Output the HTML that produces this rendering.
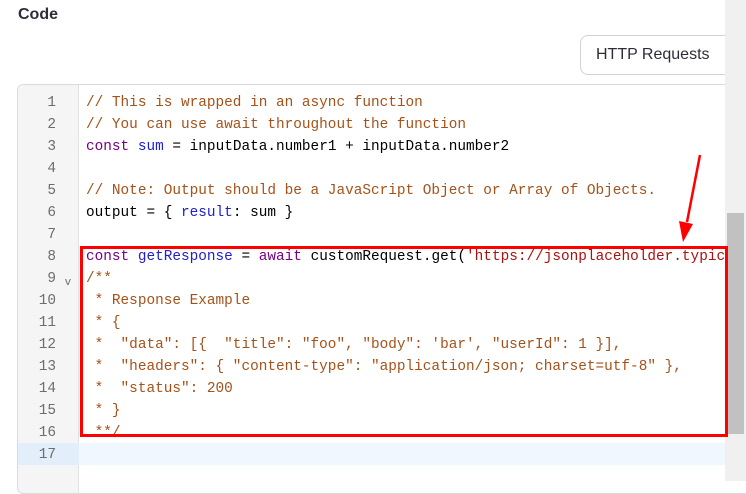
<!DOCTYPE html>
<html><head><meta charset="utf-8"><style>
*{margin:0;padding:0;box-sizing:border-box}
body{width:746px;height:481px;overflow:hidden;background:#fff;font-family:"Liberation Sans",sans-serif;position:relative}
.title{position:absolute;left:18px;top:6px;font-weight:bold;font-size:16px;color:#2d2e3a}
.btn{position:absolute;left:580px;top:35px;width:152px;height:40px;border:1px solid #d0d3da;border-radius:8px;font-size:16px;color:#2d2e3a;padding:10px 0 0 15px;background:#fff}
.ed{position:absolute;left:17px;top:84px;width:740px;height:410px;border:1px solid #d9dbe0;border-radius:6px;background:#fff;overflow:hidden}
.gut{position:absolute;left:0;top:0;width:61px;height:100%;background:#f5f5f5;border-right:1px solid #e2e2e2}
.ln{position:absolute;left:0;width:61px;height:22px;font-family:"Liberation Mono",monospace;font-size:14.4px;color:#6d6d6d;line-height:22px}
.ln span{display:inline-block;width:38px;text-align:right}
.code{position:absolute;left:68px;font-family:"Liberation Mono",monospace;font-size:14.4px;line-height:22px;white-space:pre;color:#000}
.c{color:#a5521a}.k{color:#770088}.v{color:#2020cc}.s{color:#aa1111}
.hl{position:absolute;left:0;top:358px;width:740px;height:22px;background:#f0f7fe}
.hlg{position:absolute;left:0;top:358px;width:61px;height:22px;background:#e2eefa}
.sb{position:absolute;left:725px;top:0;width:21px;height:481px;background:#f0f0f0}
.th{position:absolute;left:727px;top:213px;width:17px;height:221px;background:#c1c1c1}
.red{position:absolute;left:80px;top:246px;width:648px;height:191px;border:3px solid #f00}
</style></head><body>
<div class="title">Code</div>
<div class="btn">HTTP Requests</div>
<div class="ed">
<div class="hl"></div>
<div class="gut"></div>
<div class="hlg"></div>
<div class="ln" style="top:7px"><span>1</span></div>
<div class="ln" style="top:29px"><span>2</span></div>
<div class="ln" style="top:51px"><span>3</span></div>
<div class="ln" style="top:73px"><span>4</span></div>
<div class="ln" style="top:95px"><span>5</span></div>
<div class="ln" style="top:117px"><span>6</span></div>
<div class="ln" style="top:139px"><span>7</span></div>
<div class="ln" style="top:161px"><span>8</span></div>
<div class="ln" style="top:183px"><span>9</span> <small style="font-size:11px;position:relative;top:3px">v</small></div>
<div class="ln" style="top:205px"><span>10</span></div>
<div class="ln" style="top:227px"><span>11</span></div>
<div class="ln" style="top:249px"><span>12</span></div>
<div class="ln" style="top:271px"><span>13</span></div>
<div class="ln" style="top:293px"><span>14</span></div>
<div class="ln" style="top:315px"><span>15</span></div>
<div class="ln" style="top:337px"><span>16</span></div>
<div class="ln" style="top:359px"><span>17</span></div>
<div class="code" style="top:7px"><span class="c">// This is wrapped in an async function</span>
<span class="c">// You can use await throughout the function</span>
<span class="k">const</span> <span class="v">sum</span> = inputData.number1 + inputData.number2

<span class="c">// Note: Output should be a JavaScript Object or Array of Objects.</span>
output = { <span class="v">result</span>: sum }

<span class="k">const</span> <span class="v">getResponse</span> = <span class="k">await</span> customRequest.get(<span class="s">'https://jsonplaceholder.typicode.com/posts'</span>)
<span class="c">/**</span>
<span class="c"> * Response Example</span>
<span class="c"> * {</span>
<span class="c"> *  "data": [{  "title": "foo", "body": 'bar', "userId": 1 }],</span>
<span class="c"> *  "headers": { "content-type": "application/json; charset=utf-8" },</span>
<span class="c"> *  "status": 200</span>
<span class="c"> * }</span>
<span class="c"> **/</span>
</div>
</div>
<div class="sb"></div><div class="th"></div>
<div class="red"></div>
<svg style="position:absolute;left:0;top:0" width="746" height="481"><line x1="700" y1="155" x2="687" y2="222" stroke="#f00" stroke-width="2.5"/><polygon points="679,221 693,224 683,242" fill="#f00"/></svg>
</body></html>
